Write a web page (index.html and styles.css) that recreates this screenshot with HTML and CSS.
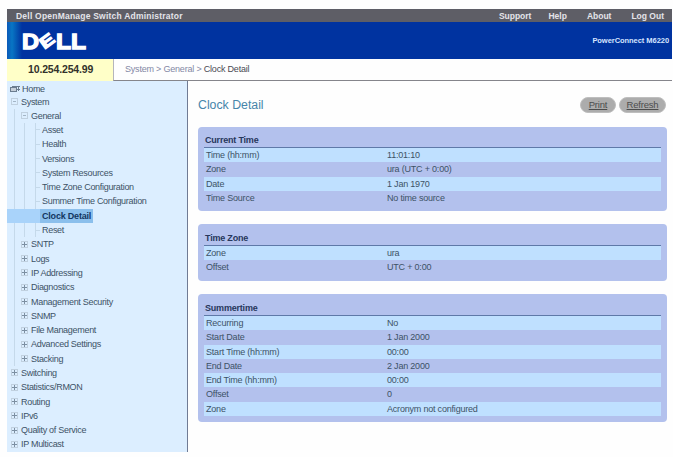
FILE: index.html
```html
<!DOCTYPE html>
<html lang="en">
  <head>
    <meta charset="UTF-8" />
    <title>Dell OpenManage Switch Administrator</title>
    <link rel="stylesheet" href="styles.css">
  </head>
  <body>
    <div class="top-bar">
      <span class="app-name">Dell OpenManage Switch Administrator</span>
      <div class="top-links">
        <a class="support">Support</a>
        <a class="help">Help</a>
        <a class="about">About</a>
        <a class="logout">Log Out</a>
      </div>
    </div>
    <div class="banner">
      <svg class="logo" width="68" height="28" viewBox="0 0 68 28">
        <g fill="#fff" stroke="#fff" stroke-width="1.3">
          <text x="1" y="22" textLength="17" lengthAdjust="spacingAndGlyphs">D</text>
          <text class="tilted" x="-7" y="5.5" transform="translate(26 14) rotate(-36)" textLength="14" lengthAdjust="spacingAndGlyphs">E</text>
          <text x="35" y="22" textLength="15" lengthAdjust="spacingAndGlyphs">L</text>
          <text x="50" y="22" textLength="15" lengthAdjust="spacingAndGlyphs">L</text>
        </g>
      </svg>
      <span class="model">PowerConnect M6220</span>
    </div>
    <div class="path-row">
      <div class="ip">10.254.254.99</div>
      <div class="breadcrumb"><span>System &gt; General &gt;</span> Clock Detail</div>
    </div>
    <div class="main">
      <ul class="tree">
        <li class="home">
          <svg width="11" height="8" viewBox="0 0 11 8">
            <rect x="0.5" y="2.5" width="6" height="4" fill="#c5cfda" stroke="#6b7d90" />
            <path d="M2 1.5h8M8.5 2v4M7 4.5h3" fill="none" stroke="#6b7d90" />
          </svg>
          Home
        </li>
        <li class="level-1 system"><i class="box open"></i>System</li>
        <li class="level-2"><i class="box open"></i>General</li>
        <li class="level-3">Asset</li>
        <li class="level-3">Health</li>
        <li class="level-3">Versions</li>
        <li class="level-3">System Resources</li>
        <li class="level-3">Time Zone Configuration</li>
        <li class="level-3">Summer Time Configuration</li>
        <li class="level-3 selected"><span>Clock Detail</span></li>
        <li class="level-3">Reset</li>
        <li class="level-2"><i class="box"></i>SNTP</li>
        <li class="level-2"><i class="box"></i>Logs</li>
        <li class="level-2"><i class="box"></i>IP Addressing</li>
        <li class="level-2"><i class="box"></i>Diagnostics</li>
        <li class="level-2"><i class="box"></i>Management Security</li>
        <li class="level-2"><i class="box"></i>SNMP</li>
        <li class="level-2"><i class="box"></i>File Management</li>
        <li class="level-2"><i class="box"></i>Advanced Settings</li>
        <li class="level-2"><i class="box"></i>Stacking</li>
        <li class="level-1"><i class="box"></i>Switching</li>
        <li class="level-1"><i class="box"></i>Statistics/RMON</li>
        <li class="level-1"><i class="box"></i>Routing</li>
        <li class="level-1"><i class="box"></i>IPv6</li>
        <li class="level-1"><i class="box"></i>Quality of Service</li>
        <li class="level-1"><i class="box"></i>IP Multicast</li>
      </ul>
      <div class="content">
        <div class="title-row">
          <h1>Clock Detail</h1>
          <a class="button print">Print</a>
          <a class="button refresh">Refresh</a>
        </div>
        <div class="card current">
          <h2>Current Time</h2>
          <dl>
            <div><dt>Time (hh:mm)</dt><dd>11:01:10</dd></div>
            <div><dt>Zone</dt><dd>ura (UTC + 0:00)</dd></div>
            <div><dt>Date</dt><dd>1 Jan 1970</dd></div>
            <div><dt>Time Source</dt><dd>No time source</dd></div>
          </dl>
        </div>
        <div class="card zone">
          <h2>Time Zone</h2>
          <dl>
            <div><dt>Zone</dt><dd>ura</dd></div>
            <div><dt>Offset</dt><dd>UTC + 0:00</dd></div>
          </dl>
        </div>
        <div class="card summer">
          <h2>Summertime</h2>
          <dl>
            <div><dt>Recurring</dt><dd>No</dd></div>
            <div><dt>Start Date</dt><dd>1 Jan 2000</dd></div>
            <div><dt>Start Time (hh:mm)</dt><dd>00:00</dd></div>
            <div><dt>End Date</dt><dd>2 Jan 2000</dd></div>
            <div><dt>End Time (hh:mm)</dt><dd>00:00</dd></div>
            <div><dt>Offset</dt><dd>0</dd></div>
            <div><dt>Zone</dt><dd>Acronym not configured</dd></div>
          </dl>
        </div>
      </div>
    </div>
  </body>
</html>
```
FILE: styles.css
```css
* {
  box-sizing: border-box;
}
body {
  margin: 0;
  padding: 9px 1px 0 7px;
  height: 457px;
  overflow: hidden;
  background: #fefefe;
  font-family: "Liberation Sans", Arial, sans-serif;
  font-size: 9px;
  letter-spacing: -0.2px;
  color: #3d5266;
  white-space: nowrap;
}
.top-bar {
  display: flex;
  justify-content: space-between;
  height: 13px;
  padding: 0 8px 0 9px;
  background: #5e5e66;
  color: #e4e4ea;
  font-size: 8.5px;
  font-weight: bold;
  line-height: 15px;
}
.app-name {
  letter-spacing: 0.22px;
}
.top-links {
  display: flex;
  gap: 20px;
  letter-spacing: 0;
}
.support {
  margin-right: -3px;
}
.banner {
  display: flex;
  justify-content: space-between;
  height: 37px;
  padding: 5px 3px 0 14px;
  background: linear-gradient(90deg, #0a58b8 0, #0876c4 5px, #0033a0 15px);
}
.logo text {
  font-size: 22px;
  font-weight: bold;
  letter-spacing: 0;
}
.logo .tilted {
  font-size: 16px;
}
.model {
  margin-top: 9px;
  color: #d5e4ff;
  font-size: 7.5px;
  font-weight: bold;
  letter-spacing: -0.05px;
}
.path-row {
  display: flex;
  height: 22px;
}
.ip {
  width: 106px;
  padding-left: 21px;
  background: #ffffc8;
  color: #33332c;
  font-size: 10.5px;
  font-weight: bold;
  letter-spacing: -0.15px;
  line-height: 20px;
}
.breadcrumb {
  flex: 1;
  padding-left: 11px;
  border-left: 1px solid #b5b5bc;
  border-bottom: 1px solid #85858b;
  color: #4a4a52;
  line-height: 20px;
}
.breadcrumb span {
  color: #8388a5;
}
.main {
  display: flex;
}
.tree {
  width: 181px;
  height: 371px;
  margin: 0;
  padding: 2px 0 0;
  border-right: 1px solid #707b94;
  background: #dceeff;
  list-style: none;
  letter-spacing: -0.3px;
}
.tree li {
  display: flex;
  align-items: center;
  height: 14.3px;
}
.tree .home {
  height: 12px;
  padding-left: 3px;
  gap: 1px;
}
.tree .system {
  height: 13.5px;
}
.level-1 {
  padding-left: 4px;
}
.level-2 {
  padding-left: 14px;
  background: linear-gradient(#c5d9ea, #c5d9ea) 7px 0 / 1px 100% no-repeat;
}
.level-3 {
  padding-left: 35px;
  background:
    linear-gradient(#c5d9ea, #c5d9ea) 7px 0 / 1px 100% no-repeat,
    linear-gradient(#c5d9ea, #c5d9ea) 17px 0 / 1px 100% no-repeat,
    linear-gradient(#c5d9ea, #c5d9ea) 28px 0 / 1px 100% no-repeat,
    linear-gradient(#c5d9ea, #c5d9ea) 28px 50% / 5px 1px no-repeat;
}
.tree .selected {
  width: 86px;
  background: linear-gradient(90deg, #a9d3fa 33px, #8bbfec 33px);
  color: #123661;
  font-weight: bold;
  letter-spacing: -0.2px;
}
.box {
  width: 7px;
  height: 7px;
  margin-right: 3px;
  border: 1px solid #c0d0df;
  background:
    linear-gradient(#7c8fa2, #7c8fa2) center / 5px 1px no-repeat,
    linear-gradient(#7c8fa2, #7c8fa2) center / 1px 5px no-repeat;
}
.box.open {
  background: linear-gradient(#a3b5c6, #a3b5c6) center / 3px 1px no-repeat;
}
.content {
  flex: 1;
  padding: 0 5px 0 10px;
}
.title-row {
  display: flex;
  align-items: center;
  height: 46px;
  padding-top: 2px;
}
h1 {
  flex: 1;
  margin: 0;
  color: #4685aa;
  font-size: 12.3px;
  font-weight: normal;
  letter-spacing: 0;
}
.button {
  height: 16px;
  border-radius: 8px;
  background: #acacac;
  border: 1px solid #bebebe;
  color: #4c4c4c;
  font-size: 9.5px;
  line-height: 14px;
  text-align: center;
  text-decoration: underline;
}
.print {
  width: 36px;
  margin-right: 3px;
}
.refresh {
  width: 47px;
  margin-right: 1px;
}
.card {
  margin-bottom: 13px;
  padding: 8px 6px 0;
  border-radius: 4px;
  background: #b3c1ed;
}
.current {
  height: 84px;
}
.zone {
  height: 57px;
}
.summer {
  height: 128px;
}
h2 {
  height: 13px;
  margin: 0;
  padding-left: 1px;
  border-bottom: 1px solid #5f79a8;
  color: #27375c;
  font-size: 9px;
  line-height: 11px;
}
.zone h2,
.summer h2 {
  height: 14px;
  line-height: 13px;
}
dl {
  margin: 0;
}
dl div {
  display: flex;
  height: 14.3px;
  padding-left: 2px;
  line-height: 15px;
}
dl div:nth-child(odd) {
  background: #bfe0ff;
}
dt {
  width: 181px;
}
dd {
  margin: 0;
}
```
